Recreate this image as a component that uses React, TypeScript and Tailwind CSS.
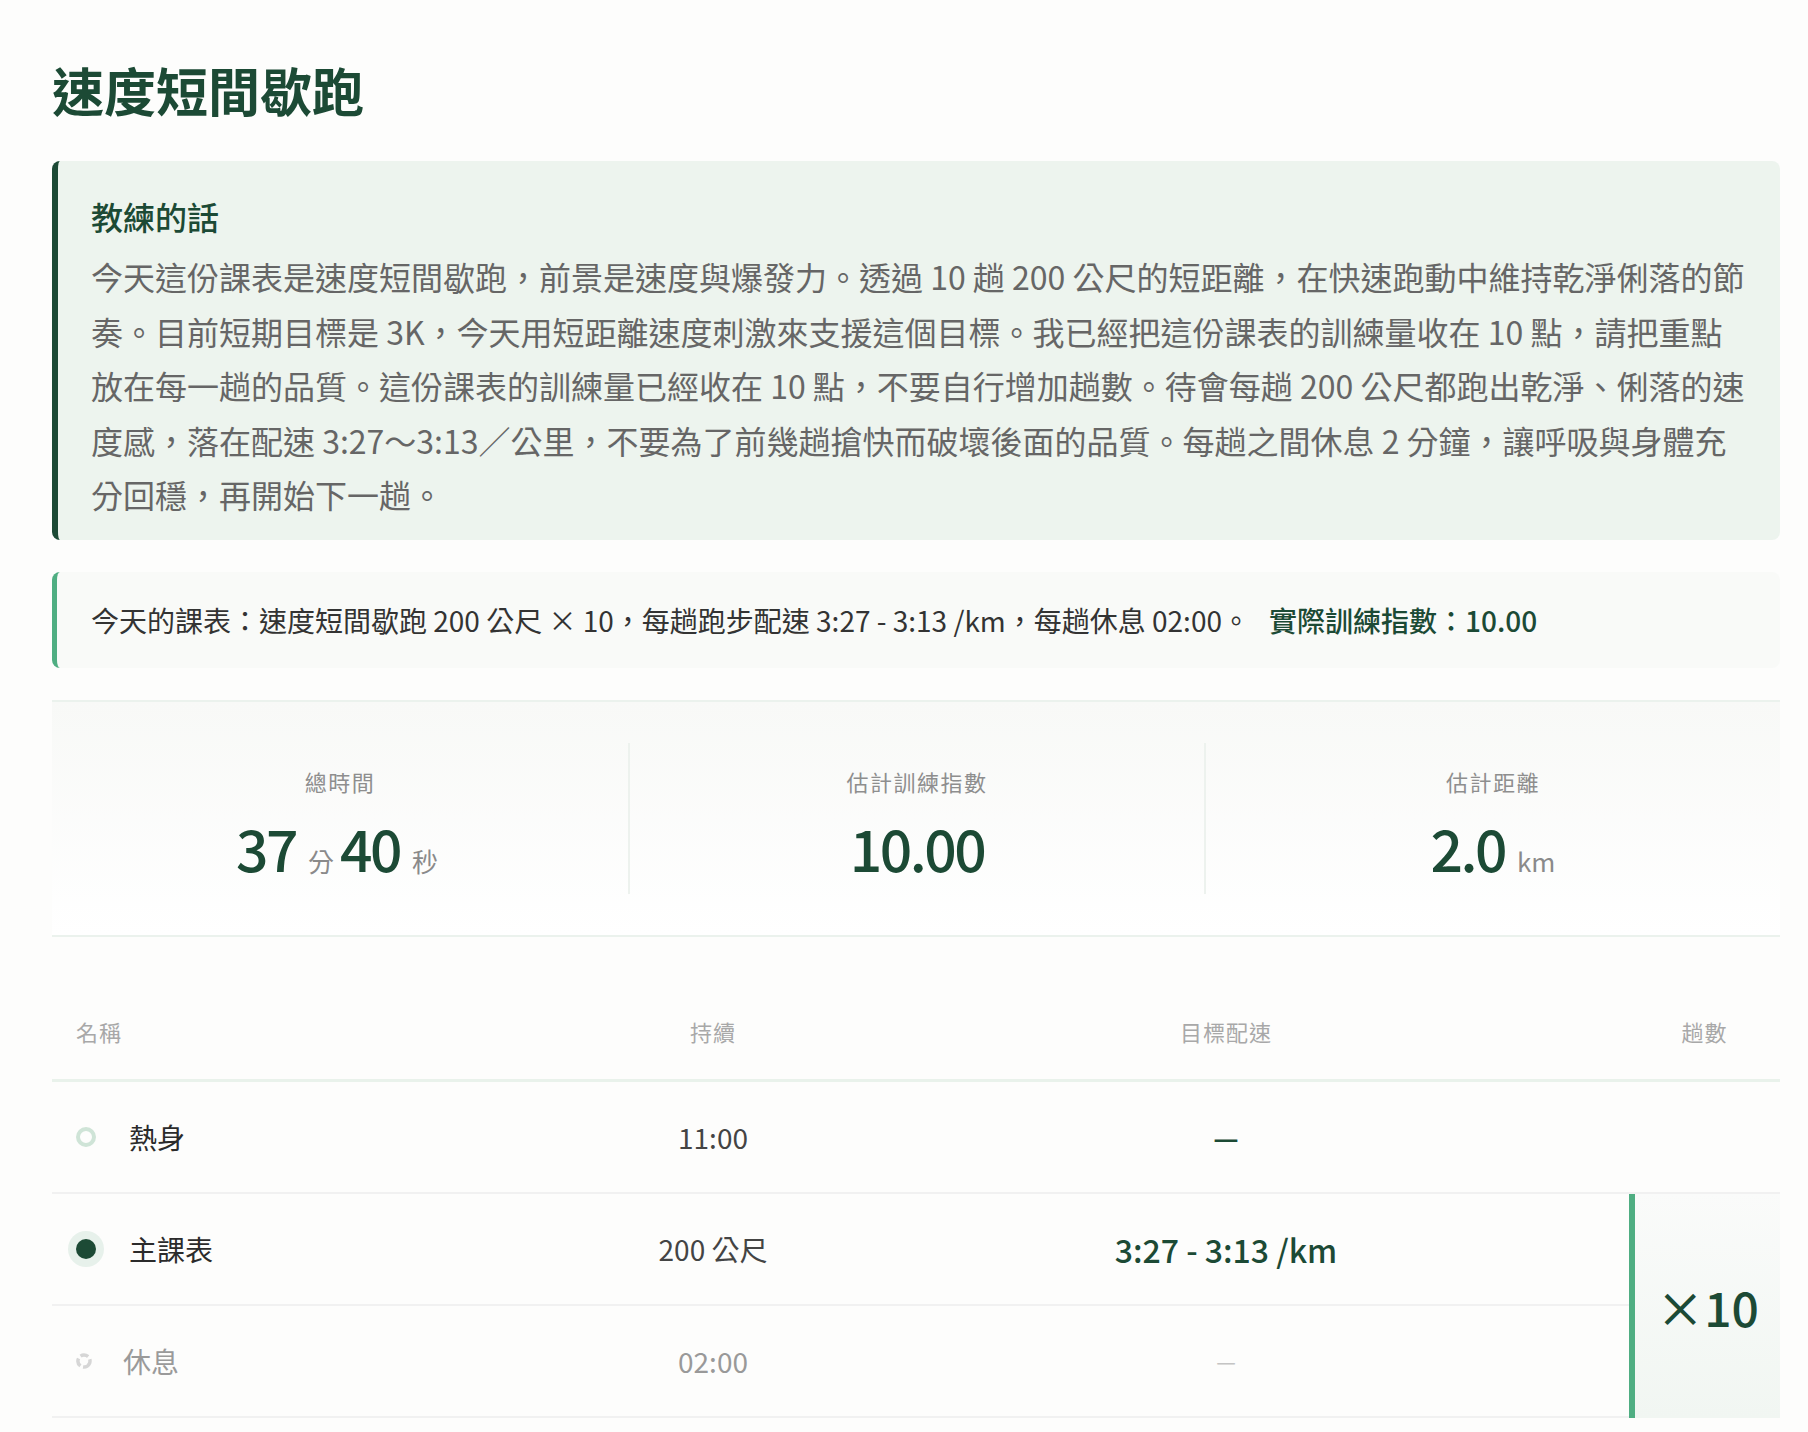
import type { ReactNode } from "react";

const COACH_NOTE =
  "今天這份課表是速度短間歇跑，前景是速度與爆發力。透過 10 趟 200 公尺的短距離，在快速跑動中維持乾淨俐落的節奏。目前短期目標是 3K，今天用短距離速度刺激來支援這個目標。我已經把這份課表的訓練量收在 10 點，請把重點放在每一趟的品質。這份課表的訓練量已經收在 10 點，不要自行增加趟數。待會每趟 200 公尺都跑出乾淨、俐落的速度感，落在配速 3:27～3:13／公里，不要為了前幾趟搶快而破壞後面的品質。每趟之間休息 2 分鐘，讓呼吸與身體充分回穩，再開始下一趟。";

function Stat({
  label,
  children,
  divider,
}: {
  label: string;
  children: ReactNode;
  divider?: boolean;
}) {
  return (
    <div
      className={`flex h-[151px] flex-col items-center pt-[22px] ${
        divider ? "border-l-2 border-[#edf2ee]" : ""
      }`}
    >
      <p className="text-[22px] leading-[32px] tracking-[1.5px] text-[#8e8e8e]">
        {label}
      </p>
      <div className="mt-[14px] flex items-baseline text-[#1c4a35]">{children}</div>
    </div>
  );
}

function Num({ children }: { children: ReactNode }) {
  return (
    <span className="text-[57px] font-medium leading-[72px] tracking-[-2.5px]">
      {children}
    </span>
  );
}

function Unit({ children }: { children: ReactNode }) {
  return <span className="ml-[12px] mr-[6px] text-[26px] text-[#8a8a8a]">{children}</span>;
}

function RingIcon() {
  return <span className="block size-[20px] rounded-full border-[4px] border-[#cfe4d7]" />;
}

function DotIcon() {
  return (
    <span className="block size-[20px] rounded-full bg-[#1c4a35] shadow-[0_0_0_8px_#e7f1eb]" />
  );
}

function RestIcon() {
  return (
    <svg width="16" height="16" viewBox="0 0 16 16" aria-hidden>
      <circle
        cx="8"
        cy="8"
        r="6"
        fill="none"
        stroke="#d6d6d6"
        strokeWidth="3.5"
        strokeDasharray="8 3"
        transform="rotate(20 8 8)"
      />
    </svg>
  );
}

const cell = "flex h-[112px] items-center border-b-2 border-[#f1f1f1]";

export default function App() {
  return (
    <div className="min-h-screen bg-[#fdfdfc] pl-[52px] pr-[28px] pt-[56px] font-['Noto_Sans_CJK_TC',sans-serif]">
      <h1 className="text-[52px] font-bold leading-[68px] text-[#1c4a35]">速度短間歇跑</h1>

      {/* Coach note */}
      <section className="mt-[37px] rounded-[8px] border-l-[6px] border-[#1c4a35] bg-[#edf4ee] pb-[18px] pl-[33px] pr-[32px] pt-[33px]">
        <h2 className="text-[32px] font-medium leading-[45px] text-[#1c4a35]">教練的話</h2>
        <p className="mt-[10px] text-[32px] leading-[54.5px] text-[#666]">{COACH_NOTE}</p>
      </section>

      {/* Today's plan */}
      <div className="mt-[32px] flex h-[96px] items-center rounded-[8px] border-l-[5px] border-[#4fae82] bg-[#f9faf8] pl-[34px] text-[28px] text-[#333]">
        <span>
          今天的課表：速度短間歇跑 200 公尺 × 10，每趟跑步配速 3:27 - 3:13 /km，每趟休息 02:00。
        </span>
        <span className="ml-[19px] font-medium text-[#1c4a35]">實際訓練指數：10.00</span>
      </div>

      {/* Stats */}
      <section className="mt-[32px] grid grid-cols-3 border-y-2 border-[#ebf2ed] bg-gradient-to-b from-[#f8f9f7] to-white py-[41px]">
        <Stat label="總時間">
          <Num>37</Num>
          <Unit>分</Unit>
          <Num>40</Num>
          <Unit>秒</Unit>
        </Stat>
        <Stat label="估計訓練指數" divider>
          <Num>10.00</Num>
        </Stat>
        <Stat label="估計距離" divider>
          <Num>2.0</Num>
          <span className="ml-[12px] text-[26px] text-[#8a8a8a]">km</span>
        </Stat>
      </section>

      {/* Steps table */}
      <div className="mt-[48px] grid grid-cols-[551px_220px_806px_151px]">
        <div className="flex h-[97px] items-center border-b-[3px] border-[#e9f2eb] pl-[24px] text-[22px] tracking-[1px] text-[#a8a8a8]">
          名稱
        </div>
        <div className="flex h-[97px] items-center justify-center border-b-[3px] border-[#e9f2eb] text-[22px] tracking-[1px] text-[#a8a8a8]">
          持續
        </div>
        <div className="flex h-[97px] items-center justify-center border-b-[3px] border-[#e9f2eb] text-[22px] tracking-[1px] text-[#a8a8a8]">
          目標配速
        </div>
        <div className="flex h-[97px] items-center justify-center border-b-[3px] border-[#e9f2eb] text-[22px] tracking-[1px] text-[#a8a8a8]">
          趟數
        </div>

        {/* Warm-up */}
        <div className={`${cell} gap-[33px] pl-[24px] text-[28px] text-[#2b2b2b]`}>
          <RingIcon />
          <span>熱身</span>
        </div>
        <div className={`${cell} justify-center text-[28px] text-[#444]`}>11:00</div>
        <div className={`${cell} justify-center text-[28px] font-bold text-[#1c4a35]`}>—</div>
        <div className={cell} />

        {/* Main set */}
        <div className={`${cell} gap-[33px] pl-[24px] text-[28px] text-[#2b2b2b]`}>
          <DotIcon />
          <span>主課表</span>
        </div>
        <div className={`${cell} justify-center text-[28px] text-[#444]`}>200 公尺</div>
        <div className={`${cell} justify-center text-[32px] font-medium text-[#1c4a35]`}>
          3:27 - 3:13 /km
        </div>
        <div className="row-span-2 flex items-center justify-center border-l-[6px] border-[#4fae82] bg-gradient-to-b from-[#fafbfa] to-[#f1f6f2] text-[48px] font-medium text-[#1c4a35]">
          ×10
        </div>

        {/* Rest */}
        <div className={`${cell} gap-[31px] pl-[24px] text-[28px] text-[#9a9a9a]`}>
          <RestIcon />
          <span>休息</span>
        </div>
        <div className={`${cell} justify-center text-[28px] text-[#999]`}>02:00</div>
        <div className={`${cell} justify-center text-[22px] text-[#c4c4c4]`}>—</div>
      </div>
    </div>
  );
}
